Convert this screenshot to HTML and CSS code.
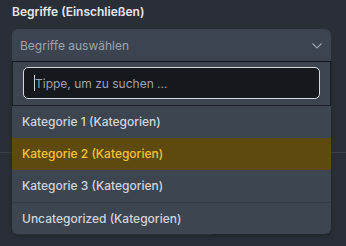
FILE: index.html
```html
<!DOCTYPE html>
<html lang="de">
<head>
    <meta charset="UTF-8">
    <meta name="viewport" content="width=device-width, initial-scale=1.0">
    <title>Begriffe</title>
    <link rel="stylesheet" href="styles.css">
</head>
<body>
    <div class="field">
        <div class="label">Begriffe (Einschließen)</div>
        <div class="dropdown">
            <div class="select">
                <span>Begriffe auswählen</span>
                <svg class="chevron" width="10" height="6" viewBox="0 0 10 6">
                    <path d="M0.5 0.5 L5 5 L9.5 0.5" fill="none" stroke="#9ca3af" stroke-width="1.1"/>
                </svg>
            </div>
            <div class="menu">
                <div class="search-wrap">
                    <div class="search">
                        <span class="caret"></span>
                        <input type="text" placeholder="Tippe, um zu suchen ...">
                    </div>
                </div>
                <div class="option">Kategorie 1 (Kategorien)</div>
                <div class="option active">Kategorie 2 (Kategorien)</div>
                <div class="option">Kategorie 3 (Kategorien)</div>
                <div class="option last">Uncategorized (Kategorien)</div>
            </div>
        </div>
    </div>
    <div class="section">
        <div class="button-behind"></div>
    </div>
</body>
</html>
```

FILE: styles.css
```css
body {
    margin: 0;
    background-color: #2a2f37;
    font-family: Inter, "Noto Sans", sans-serif;
    height: 246px;
    overflow: hidden;
}
.field {
    padding: 4px 15px 0 12px;
}
.label {
    font-size: 12px;
    font-weight: 600;
    line-height: 16px;
    color: #e5e7eb;
    margin-bottom: 9px;
}
.dropdown {
    position: relative;
}
.select {
    height: 32px;
    display: flex;
    align-items: center;
    justify-content: space-between;
    padding: 0 9px 0 8px;
    background-color: #3b4450;
    border-radius: 6px 6px 0 0;
    font-size: 12px;
    color: #9ca3af;
}
.chevron {
    margin-top: 1px;
}
.menu {
    position: absolute;
    top: 32px;
    left: 0;
    right: 0;
    z-index: 2;
    background-color: #3c4550;
    border-top: 1px solid #14181c;
    border-radius: 0 0 6px 6px;
    box-shadow: 0 2px 4px rgba(0, 0, 0, 0.25);
}
.search-wrap {
    padding: 5px 10px 6px 10px;
    border-bottom: 1px solid #1c2025;
    border-left: 1px solid #1c2025;
    border-right: 1px solid #1c2025;
}
.search {
    position: relative;
}
.search input {
    display: block;
    box-sizing: border-box;
    width: 100%;
    height: 32px;
    padding: 0 10px 0 11px;
    background-color: #15191d;
    border: 1px solid #d4d7dc;
    border-radius: 5px;
    font-family: inherit;
    font-size: 12px;
    color: #e5e7eb;
    outline: none;
}
.search input::placeholder {
    color: #9ca3af;
}
.caret {
    position: absolute;
    left: 11px;
    top: 8px;
    width: 1px;
    height: 16px;
    background-color: #d1d5db;
}
.option {
    height: 32px;
    line-height: 32px;
    padding-left: 10px;
    font-size: 12px;
    font-weight: 500;
    color: #d1d5db;
}
.option.active {
    background-color: #5e4a0e;
    color: #f3c436;
}
.option.last {
    border-top: 1px solid #343b45;
    height: 31px;
    line-height: 31px;
}
.section {
    margin-top: 91px;
    border-top: 1px solid #3a414b;
    padding: 0 12px;
}
.button-behind {
    margin-top: 46px;
    width: 203px;
    height: 36px;
    background-color: #363d48;
    border-radius: 5px;
}
```
